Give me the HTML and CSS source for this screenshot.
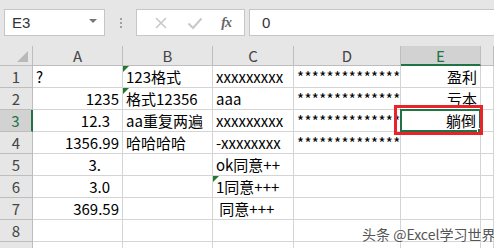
FILE: index.html
```html
<!DOCTYPE html>
<html lang="zh">

<head>
    <meta charset="UTF-8">
    <title>Excel</title>
    <link rel="stylesheet" href="styles.css">
</head>

<body>
    <div class="app">
        <div class="formula-bar">
            <div class="name-box">
                <span class="name-text">E3</span>
                <span class="name-arrow"></span>
            </div>
            <div class="grip"><span></span><span></span><span></span></div>
            <div class="fx-box">
                <svg class="fx-icon" width="14" height="14" viewBox="0 0 14 14">
                    <path d="M2 2 L12 12 M12 2 L2 12" stroke="#c8c8c8" stroke-width="1.6" fill="none" />
                </svg>
                <svg class="fx-icon" width="16" height="14" viewBox="0 0 16 14">
                    <path d="M1.5 7.5 L6 12 L14.5 2.5" stroke="#c8c8c8" stroke-width="2" fill="none" />
                </svg>
                <span class="fx-text">fx</span>
            </div>
            <div class="formula-input">0</div>
        </div>

        <div class="sheet">
            <div class="grid">
                <div class="corner"><span class="corner-tri"></span></div>
                <div class="col-head">A</div>
                <div class="col-head">B</div>
                <div class="col-head">C</div>
                <div class="col-head">D</div>
                <div class="col-head active">E</div>
                <div class="col-head"></div>

                <div class="row-head">1</div>
                <div class="cell">?</div>
                <div class="cell flag">123格式</div>
                <div class="cell">xxxxxxxxx</div>
                <div class="cell stars">**************</div>
                <div class="cell right">盈利</div>
                <div class="cell"></div>

                <div class="row-head">2</div>
                <div class="cell num">1235</div>
                <div class="cell flag">格式12356</div>
                <div class="cell">aaa</div>
                <div class="cell stars">**************</div>
                <div class="cell right">亏本</div>
                <div class="cell"></div>

                <div class="row-head active">3</div>
                <div class="cell num dec1">12.3</div>
                <div class="cell">aa重复两遍</div>
                <div class="cell">xxxxxxxxx</div>
                <div class="cell stars">**************</div>
                <div class="cell right selected">躺倒<span class="handle"></span></div>
                <div class="cell"></div>

                <div class="row-head">4</div>
                <div class="cell num">1356.99</div>
                <div class="cell">哈哈哈哈</div>
                <div class="cell">-xxxxxxxx</div>
                <div class="cell stars">**************</div>
                <div class="cell"></div>
                <div class="cell"></div>

                <div class="row-head">5</div>
                <div class="cell num dec0">3.</div>
                <div class="cell"></div>
                <div class="cell">ok同意++</div>
                <div class="cell"></div>
                <div class="cell"></div>
                <div class="cell"></div>

                <div class="row-head">6</div>
                <div class="cell num dec1">3.0</div>
                <div class="cell"></div>
                <div class="cell flag">1同意+++</div>
                <div class="cell"></div>
                <div class="cell"></div>
                <div class="cell"></div>

                <div class="row-head">7</div>
                <div class="cell num">369.59</div>
                <div class="cell"></div>
                <div class="cell">&nbsp;同意+++</div>
                <div class="cell"></div>
                <div class="cell"></div>
                <div class="cell"></div>

                <div class="row-head">8</div>
                <div class="cell"></div>
                <div class="cell"></div>
                <div class="cell"></div>
                <div class="cell"></div>
                <div class="cell"></div>
                <div class="cell"></div>

                <div class="row-head"></div>
                <div class="cell"></div>
                <div class="cell"></div>
                <div class="cell"></div>
                <div class="cell"></div>
                <div class="cell"></div>
                <div class="cell"></div>
            </div>

            <div class="highlight"></div>
            <div class="watermark">头条 @Excel学习世界</div>
        </div>
    </div>
</body>

</html>
```

FILE: styles.css
```css
* {
    margin: 0;
    padding: 0;
    box-sizing: border-box;
}

body {
    width: 494px;
    height: 248px;
    overflow: hidden;
    background-color: #e6e6e6;
    font-family: "Noto Sans CJK SC", "Liberation Sans", sans-serif;
    color: #000;
}

.app {
    width: 494px;
    height: 248px;
    overflow: hidden;
}

/* formula bar */

.formula-bar {
    height: 46px;
    display: flex;
    align-items: flex-start;
    padding-top: 9px;
    padding-left: 4px;
}

.name-box {
    width: 101px;
    height: 27px;
    background-color: #fff;
    border: 1px solid #c6c6c6;
    display: flex;
    align-items: center;
    justify-content: space-between;
    padding: 0 7px 0 7px;
}

.name-text {
    font-family: "Liberation Sans", sans-serif;
    font-size: 15px;
    color: #333;
}

.name-arrow {
    width: 0;
    height: 0;
    border-left: 4px solid transparent;
    border-right: 4px solid transparent;
    border-top: 4px solid #777;
    margin-top: -4px;
}

.grip {
    width: 31px;
    height: 27px;
    display: flex;
    flex-direction: column;
    align-items: center;
    justify-content: center;
    gap: 2px;
}

.grip span {
    width: 2px;
    height: 2px;
    background-color: #a0a0a0;
}

.fx-box {
    width: 109px;
    height: 27px;
    background-color: #fff;
    border: 1px solid #c6c6c6;
    display: flex;
    align-items: center;
    justify-content: space-between;
    padding: 0 13px 0 17px;
}

.fx-text {
    font-family: "Liberation Serif", serif;
    font-style: italic;
    font-weight: bold;
    font-size: 14px;
    color: #666;
    letter-spacing: -1px;
}

.formula-input {
    flex: 1;
    height: 27px;
    margin-left: 4px;
    background-color: #fff;
    border: 1px solid #c6c6c6;
    border-right: none;
    font-family: "Liberation Sans", sans-serif;
    font-size: 15px;
    color: #333;
    padding-left: 12px;
    line-height: 25px;
}

/* sheet */

.sheet {
    position: relative;
}

.grid {
    display: grid;
    grid-template-columns: 33px 90px 90px 81px 107px 80px 1fr;
    grid-template-rows: 20px repeat(9, 22px);
    background-color: #fff;
}

.corner,
.col-head,
.row-head {
    background-color: #e6e6e6;
    border-right: 1px solid #bdbdbd;
    border-bottom: 1px solid #bdbdbd;
    color: #444;
    font-size: 15px;
    display: flex;
    align-items: center;
    justify-content: center;
    line-height: 1;
}

.corner {
    position: relative;
}

.corner-tri {
    position: absolute;
    right: 4px;
    bottom: 3px;
    width: 0;
    height: 0;
    border-left: 11px solid transparent;
    border-bottom: 11px solid #b9b9b9;
}

.col-head.active {
    background-color: #d2d2d2;
    color: #217346;
    border-bottom: 2px solid #217346;
}

.row-head.active {
    background-color: #d2d2d2;
    color: #217346;
    border-right: 2px solid #217346;
}

.cell {
    position: relative;
    border-right: 1px solid #d4d4d4;
    border-bottom: 1px solid #d4d4d4;
    font-size: 15px;
    line-height: 21px;
    padding: 0 3px;
    white-space: nowrap;
    overflow: visible;
}

.cell.num,
.cell.right {
    text-align: right;
}

.cell.num.dec1 {
    padding-right: 12px;
}

.cell.num.dec0 {
    padding-right: 21px;
}

.cell.stars {
    letter-spacing: 0.4px;
}

.cell.flag::before {
    content: "";
    position: absolute;
    left: 0;
    top: 0;
    width: 0;
    height: 0;
    border-top: 6px solid #1e7a2d;
    border-right: 6px solid transparent;
}

.cell.selected {
    border: 2px solid #217346;
    margin: -1px 0 0 -1px;
    line-height: 19px;
    padding-right: 3px;
}

.handle {
    position: absolute;
    right: -4px;
    bottom: -4px;
    width: 6px;
    height: 6px;
    background-color: #217346;
    border: 1px solid #fff;
}

.highlight {
    position: absolute;
    left: 394px;
    top: 59px;
    width: 89px;
    height: 30px;
    border: 3px solid #e8232a;
}

.watermark {
    position: absolute;
    left: 362px;
    top: 178px;
    font-size: 14px;
    color: #555;
    text-shadow: 0 0 2px #fff, 0 0 2px #fff;
    white-space: nowrap;
}
```
